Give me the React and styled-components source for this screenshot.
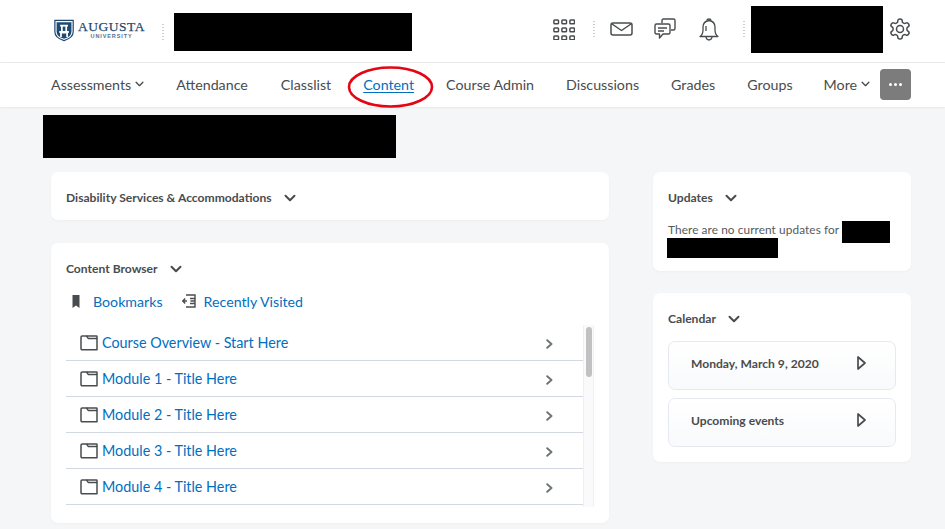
import React from "react";
import styled, { createGlobalStyle } from "styled-components";

const Global = createGlobalStyle`
  html, body { margin: 0; padding: 0; height: 529px; overflow: hidden; background: #f5f6f8; }
  body { font-family: Lato, "Open Sans", sans-serif; color: #494c4e; }
  * { box-sizing: border-box; }
`;

const Header = styled.header`
  height: 63px; background: #fff; border-bottom: 1px solid #e9ebee;
  display: flex; align-items: center; padding-left: 54px; padding-top: 1px;
`;
const Logo = styled.div`display: flex; align-items: center; gap: 4px; width: 91px; height: 26px; margin-bottom: 3px;`;
const LogoText = styled.div`display: flex; flex-direction: column; align-items: center; color: #1f4a72; line-height: 1;`;
const LogoName = styled.span`font-family: "Liberation Serif", serif; font-size: 13.5px; letter-spacing: 0.5px; line-height: 13px; -webkit-text-stroke: 0.25px #1f4a72;`;
const LogoSub = styled.span`font-family: "Liberation Sans", sans-serif; font-size: 5.5px; font-weight: 700; letter-spacing: 0.9px; line-height: 7px; color: #54708c;`;
const Dots = styled.div`
  width: 2px; height: 18px; flex: none; margin: ${p => p.$margin};
  background-image: radial-gradient(circle, #c9ced6 0.8px, transparent 1px);
  background-size: 2px 3px;
`;
const Redact = styled.div`background: #000; flex: none; width: ${p => p.$w}px; height: ${p => p.$h}px;`;
const HeaderIcons = styled.div`display: flex; align-items: center; margin-left: auto; padding-right: 33px; margin-bottom: 5px;`;
const HeaderIcon = styled.span`
  display: flex; align-items: center; justify-content: center; width: ${p => p.$w}px; flex: none; color: #565a5c;
  margin-left: ${p => p.$ml || 0}px;
`;

const Nav = styled.nav`
  height: 44px; background: #fff; box-shadow: 0 1px 2px rgba(0,0,0,0.06); position: relative;
  display: flex; align-items: center; padding: 0 0 1px 51px; font-size: 14.25px; color: #494c4e;
`;
const NavItem = styled.a`
  display: inline-flex; align-items: center; gap: 4px; margin-right: ${p => p.$mr}px; white-space: nowrap;
  color: ${p => (p.$active ? "#006fbf" : "#494c4e")};
  text-decoration: ${p => (p.$active ? "underline" : "none")};
  text-underline-offset: 2px;
`;
const MoreButton = styled.button`
  width: 31px; height: 31px; border: 0; border-radius: 4px; background: #7c7c7c; color: #fff;
  display: flex; align-items: center; justify-content: center; gap: 2px; padding: 0; margin-left: 10px;
`;
const MoreDot = styled.i`width: 3px; height: 3px; border-radius: 50%; background: #fff; display: block;`;
const Ellipse = styled.svg`position: absolute; left: 347px; top: 2px; pointer-events: none;`;

const Main = styled.main`padding: 8px 34px 0 43px;`;
const CourseBar = styled(Redact)`margin-bottom: 14px;`;
const Columns = styled.div`display: grid; grid-template-columns: 558px 258px; column-gap: 44px; margin-left: 8px;`;
const Column = styled.div`display: flex; flex-direction: column; gap: ${p => p.$gap}px;`;
const Card = styled.section`
  background: #fff; border-radius: 7px; box-shadow: 0 1px 3px rgba(0,0,0,0.03);
  height: ${p => p.$h}px; padding: ${p => p.$pad};
`;
const CardTitle = styled.h2`
  margin: 0; font-size: 12.1px; font-weight: 700; color: #494c4e; display: flex; align-items: center;
  gap: 12px; line-height: 18px;
`;
const QuickLinks = styled.div`display: flex; align-items: center; margin: 13px 0 0 6px; font-size: 14.2px; color: #006fbf; height: 20px;`;
const QuickLink = styled.a`display: inline-flex; align-items: center; color: #006fbf; gap: ${p => p.$gap}px; margin-right: ${p => p.$mr}px;`;
const Browser = styled.div`display: flex; margin-top: 14px; height: 182px; overflow: hidden;`;
const List = styled.ul`list-style: none; margin: 0; padding: 0; width: 518px;`;
const Row = styled.li`
  height: 36px; border-bottom: 1px solid #d3d9e3; display: flex; align-items: center;
  padding: 0 30px 0 14px; font-size: 14.35px; color: #006fbf;
`;
const RowLabel = styled.a`margin-left: 4px; flex: 1; color: #006fbf;`;
const RowArrow = styled.span`display: flex; margin-top: 2px;`;
const Track = styled.div`width: 11px; background: #fafafa; border-left: 1px solid #f0f0f0; border-right: 1px solid #f0f0f0; padding: 2px 2px 0 2px;`;
const Thumb = styled.div`width: 6px; height: 50px; border-radius: 3px; background: #c1c1c1;`;

const UpdatesText = styled.div`font-size: 11.8px; line-height: 18px; color: #565a5c; margin-top: 14px; letter-spacing: 0.1px;`;
const TextLine = styled.div`display: flex; align-items: flex-start; gap: 3px; height: 18px; white-space: nowrap;`;
const SecondRedact = styled(Redact)`margin: -1px 0 0 -1px;`;
const EventList = styled.div`display: flex; flex-direction: column; gap: 8px; margin-top: 13px;`;
const EventButton = styled.div`
  height: 49px; border: 1px solid #e6eaf0; border-radius: 7px;
  background: linear-gradient(#fff, #f9fafc); display: flex; align-items: center; justify-content: space-between;
  padding: 0 29px 5px 22px; font-size: 12.1px; font-weight: 700; color: #494c4e;
`;

const Chev = ({ size = 12, w = 2 }) => (
  <svg width={size} height={size * 0.7} viewBox="0 0 12 8" fill="none" stroke="#494c4e" strokeWidth={w} strokeLinecap="round" strokeLinejoin="round"><path d="M1.500 1.500 6 6l4.500-4.500" /></svg>
);
const Folder = () => (
  <svg width="18" height="16" viewBox="0 0 18 16" fill="none" stroke="#494c4e" strokeWidth="1.500" strokeLinejoin="round"><path d="M1 2.200q0-1.200 1.200-1.200h4.300l1.700 2.400H17v11.400H2.200Q1 14.800 1 13.600Z" /><path d="M6.500 1H16.500q.5 0 .5.5V3.400" /></svg>
);
const RowChev = () => (
  <svg width="7" height="10" viewBox="0 0 7 10" fill="none" stroke="#6e7376" strokeWidth="1.900" strokeLinecap="round" strokeLinejoin="round"><path d="M1.200 1.200 5.500 5 1.200 8.800" /></svg>
);
const Tri = () => (
  <svg width="9" height="14" viewBox="0 0 9 14" fill="#fff" stroke="#494c4e" strokeWidth="1.700" strokeLinejoin="round"><path d="M1 1v12l7-6Z" /></svg>
);

const modules = ["Course Overview - Start Here", "Module 1 - Title Here", "Module 2 - Title Here", "Module 3 - Title Here", "Module 4 - Title Here"];

export default function App() {
  return (
    <>
      <Global />
      <Header>
        <Logo>
          <svg width="23" height="25" viewBox="0 0 23 25">
            <path d="M1 1h21v13q0 7-10.500 10Q1 21 1 14Z" fill="#fff" stroke="#1f4a72" strokeWidth="1.400" />
            <path d="M3 3h17v11q0 5.500-8.500 8Q3 19.500 3 14Z" fill="#1f4a72" />
            <path d="M7 6h9v2h-1v5h2v2l-1 .5V20h-2v-4H9v4H7v-4.500L6 15v-2h2V8H7Z" fill="#fff" />
            <path d="M10 8h3v5h-3Z" fill="#1f4a72" />
          </svg>
          <LogoText>
            <LogoName>AUGUSTA</LogoName>
            <LogoSub>UNIVERSITY</LogoSub>
          </LogoText>
        </Logo>
        <Dots $margin="0 10px 0 17px" />
        <Redact $w={238} $h={38} />
        <HeaderIcons>
          <HeaderIcon $w={22}>
            <svg width="22" height="21" viewBox="0 0 22 21" fill="none" stroke="#494c4e" strokeWidth="1.500">
              {[0, 8, 16].flatMap(y => [0, 8, 16].map(x => <rect key={`${x}-${y}`} x={x + 0.9} y={y + 0.9} width="4.600" height="3.800" rx="0.800" />))}
            </svg>
          </HeaderIcon>
          <Dots $margin="0 15px 0 18px" />
          <HeaderIcon $w={23}>
            <svg width="23" height="14" viewBox="0 0 23 14" fill="none" stroke="#494c4e" strokeWidth="1.500" strokeLinejoin="round"><rect x="1" y="1" width="21" height="12" rx="2" /><path d="m2 2 9.500 6.500L21 2" /></svg>
          </HeaderIcon>
          <HeaderIcon $w={22} $ml={21}>
            <svg width="22" height="23" viewBox="0 0 22 23" fill="none" stroke="#494c4e" strokeWidth="1.400" strokeLinejoin="round"><path d="M8 5V2.500Q8 1 9.500 1h10Q21 1 21 2.500v8q0 1.500-1.500 1.500H17" /><path d="M2.500 6h12Q16 6 16 7.500v7q0 1.500-1.500 1.500H9l-3.500 4v-4h-3Q1 16 1 14.500v-7Q1 6 2.500 6Z" fill="#fff" /><path d="M4 10h9M4 13h6" /></svg>
          </HeaderIcon>
          <HeaderIcon $w={22} $ml={22}>
            <svg width="20" height="23" viewBox="0 0 20 23" fill="none" stroke="#494c4e" strokeWidth="1.300" strokeLinejoin="round"><path d="M1 18.500q3-2 3-6.500V9q0-5.500 6-6.500 6 1 6 6.500v3q0 4.500 3 6.500Z" /><path d="M8 2.500q0-1.500 2-1.500t2 1.500M7 19q.5 3 3 3t3-3M7 8v5" /></svg>
          </HeaderIcon>
          <Dots $margin="0 6px 0 23px" />
          <Redact $w={132} $h={47} />
          <HeaderIcon $w={24} $ml={5}>
            <svg width="24" height="24" viewBox="0 0 24 24" fill="none" stroke="#494c4e" strokeWidth="1.500" strokeLinecap="round" strokeLinejoin="round"><path d="M12.220 2h-.44a2 2 0 0 0-2 2v.18a2 2 0 0 1-1 1.730l-.43.250a2 2 0 0 1-2 0l-.15-.080a2 2 0 0 0-2.730.730l-.220.380a2 2 0 0 0 .730 2.730l.150.100a2 2 0 0 1 1 1.720v.510a2 2 0 0 1-1 1.740l-.150.090a2 2 0 0 0-.730 2.730l.220.380a2 2 0 0 0 2.730.730l.150-.080a2 2 0 0 1 2 0l.43.250a2 2 0 0 1 1 1.730V20a2 2 0 0 0 2 2h.44a2 2 0 0 0 2-2v-.18a2 2 0 0 1 1-1.730l.43-.250a2 2 0 0 1 2 0l.15.080a2 2 0 0 0 2.730-.730l.220-.390a2 2 0 0 0-.730-2.730l-.150-.080a2 2 0 0 1-1-1.740v-.500a2 2 0 0 1 1-1.740l.150-.090a2 2 0 0 0 .730-2.730l-.220-.380a2 2 0 0 0-2.730-.730l-.150.080a2 2 0 0 1-2 0l-.43-.250a2 2 0 0 1-1-1.730V4a2 2 0 0 0-2-2z" /><circle cx="12" cy="12" r="3.500" /></svg>
          </HeaderIcon>
        </HeaderIcons>
      </Header>

      <Nav>
        <NavItem $mr={32}>Assessments <Chev size={9} w={1.800} /></NavItem>
        <NavItem $mr={33}>Attendance</NavItem>
        <NavItem $mr={32}>Classlist</NavItem>
        <NavItem $mr={32} $active>Content</NavItem>
        <NavItem $mr={32}>Course Admin</NavItem>
        <NavItem $mr={32}>Discussions</NavItem>
        <NavItem $mr={32}>Grades</NavItem>
        <NavItem $mr={31}>Groups</NavItem>
        <NavItem $mr={0}>More <Chev size={9} w={1.800} /></NavItem>
        <MoreButton><MoreDot /><MoreDot /><MoreDot /></MoreButton>
        <Ellipse width="88" height="44" viewBox="0 0 88 44" fill="none">
          <ellipse cx="43.500" cy="22" rx="41.500" ry="19.500" stroke="#e30613" strokeWidth="2.600" />
        </Ellipse>
      </Nav>

      <Main>
        <CourseBar $w={353} $h={43} />
        <Columns>
          <Column $gap={23}>
            <Card $h={48} $pad="17px 15px 0">
              <CardTitle>Disability Services &amp; Accommodations <Chev size={12} w={2} /></CardTitle>
            </Card>
            <Card $h={280} $pad="17px 15px 0">
              <CardTitle>Content Browser <Chev size={12} w={2} /></CardTitle>
              <QuickLinks>
                <QuickLink $gap={13} $mr={19}>
                  <svg width="8" height="13" viewBox="0 0 8 13" fill="#494c4e"><path d="M.5 0h7v13L4 10.500.5 13Z" /></svg>
                  Bookmarks
                </QuickLink>
                <QuickLink $gap={8} $mr={0}>
                  <svg width="14" height="14" viewBox="0 0 14 14" fill="none" stroke="#494c4e" strokeWidth="1.400"><path d="M4 1h9v12H4M13 4.500H8M13 7H8.500M13 9.500H8" /><path d="M5 7H1m2.200-2.400L.8 7l2.400 2.400" /></svg>
                  Recently Visited
                </QuickLink>
              </QuickLinks>
              <Browser>
                <List>
                  {modules.map(m => (
                    <Row key={m}>
                      <Folder />
                      <RowLabel>{m}</RowLabel>
                      <RowArrow><RowChev /></RowArrow>
                    </Row>
                  ))}
                </List>
                <Track><Thumb /></Track>
              </Browser>
            </Card>
          </Column>
          <Column $gap={22}>
            <Card $h={99} $pad="17px 15px 0">
              <CardTitle>Updates <Chev size={12} w={2} /></CardTitle>
              <UpdatesText>
                <TextLine>There are no current updates for <Redact $w={48} $h={22} /></TextLine>
                <SecondRedact $w={111} $h={20} />
              </UpdatesText>
            </Card>
            <Card $h={169} $pad="17px 15px 0">
              <CardTitle>Calendar <Chev size={12} w={2} /></CardTitle>
              <EventList>
                <EventButton>Monday, March 9, 2020 <Tri /></EventButton>
                <EventButton>Upcoming events <Tri /></EventButton>
              </EventList>
            </Card>
          </Column>
        </Columns>
      </Main>
    </>
  );
}
